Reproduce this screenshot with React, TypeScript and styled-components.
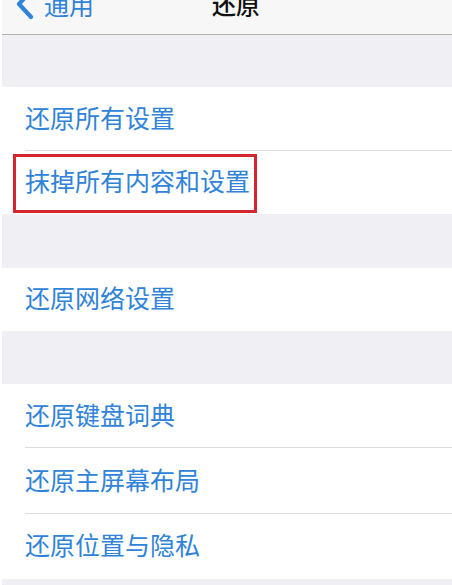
import React from "react";
import styled, { createGlobalStyle } from "styled-components";

const GlobalStyle = createGlobalStyle`
  html, body {
    margin: 0;
    padding: 0;
    background: #ffffff;
    overflow: hidden;
  }
  body {
    font-family: "Noto Sans CJK SC", "Noto Sans", sans-serif;
  }
`;

const Screen = styled.div`
  width: 452px;
  height: 585px;
  overflow: hidden;
  background: #ffffff;
  padding-left: 2px;
  box-sizing: border-box;
`;

const Content = styled.div`
  margin-top: -30px;
  display: flex;
  flex-direction: column;
`;

const NavBar = styled.div`
  height: 65px;
  box-sizing: border-box;
  background: #f7f7f7;
  border-bottom: 1px solid #b2b2b2;
  display: grid;
  grid-template-columns: 1fr auto 1fr;
  align-items: center;
  padding: 4px 0 0 12px;
`;

const BackButton = styled.div`
  display: flex;
  align-items: center;
  gap: 8px;
  color: #2f83d8;
  font-size: 25px;
  line-height: 25px;
`;

const Title = styled.div`
  color: #111111;
  font-size: 24px;
  line-height: 24px;
  font-weight: 500;
  margin-left: 6px;
`;

const Gap = styled.div<{ $h: number }>`
  height: ${(p) => p.$h}px;
  background: #efeff4;
`;

const Group = styled.div`
  background: #ffffff;
  display: flex;
  flex-direction: column;
`;

const Row = styled.div<{ $h: number; $sep?: boolean }>`
  position: relative;
  height: ${(p) => p.$h}px;
  display: flex;
  align-items: center;
  padding: 0 0 4px 23px;
  box-sizing: border-box;
  color: #2f83d8;
  font-size: 25px;
  line-height: 25px;
  &::after {
    content: "";
    display: ${(p) => (p.$sep ? "block" : "none")};
    position: absolute;
    left: 23px;
    right: 0;
    bottom: 0;
    height: 1px;
    background: #dcdce0;
  }
`;

const Highlight = styled.div`
  position: absolute;
  left: 11px;
  top: 3px;
  width: 244px;
  height: 59px;
  border: 3px solid #d3262e;
  box-sizing: border-box;
  pointer-events: none;
`;

const Chevron = () => (
  <svg width="22" height="32" viewBox="0 0 22 32" style={{ display: "block" }}>
    <path d="M17 3 L5 16 L17 29" fill="none" stroke="#2f83d8" strokeWidth="4.2" strokeLinecap="round" strokeLinejoin="round" />
  </svg>
);

export default function App() {
  return (
    <>
      <GlobalStyle />
      <Screen>
        <Content>
          <NavBar>
            <BackButton>
              <Chevron />
              <span>通用</span>
            </BackButton>
            <Title>还原</Title>
            <div />
          </NavBar>
          <Gap $h={52} />
          <Group>
            <Row $h={64} $sep>还原所有设置</Row>
            <Row $h={63}>
              抹掉所有内容和设置
              <Highlight />
            </Row>
          </Group>
          <Gap $h={54} />
          <Group>
            <Row $h={63}>还原网络设置</Row>
          </Group>
          <Gap $h={53} />
          <Group>
            <Row $h={64} $sep>还原键盘词典</Row>
            <Row $h={66} $sep>还原主屏幕布局</Row>
            <Row $h={65}>还原位置与隐私</Row>
          </Group>
          <Gap $h={40} />
        </Content>
      </Screen>
    </>
  );
}
